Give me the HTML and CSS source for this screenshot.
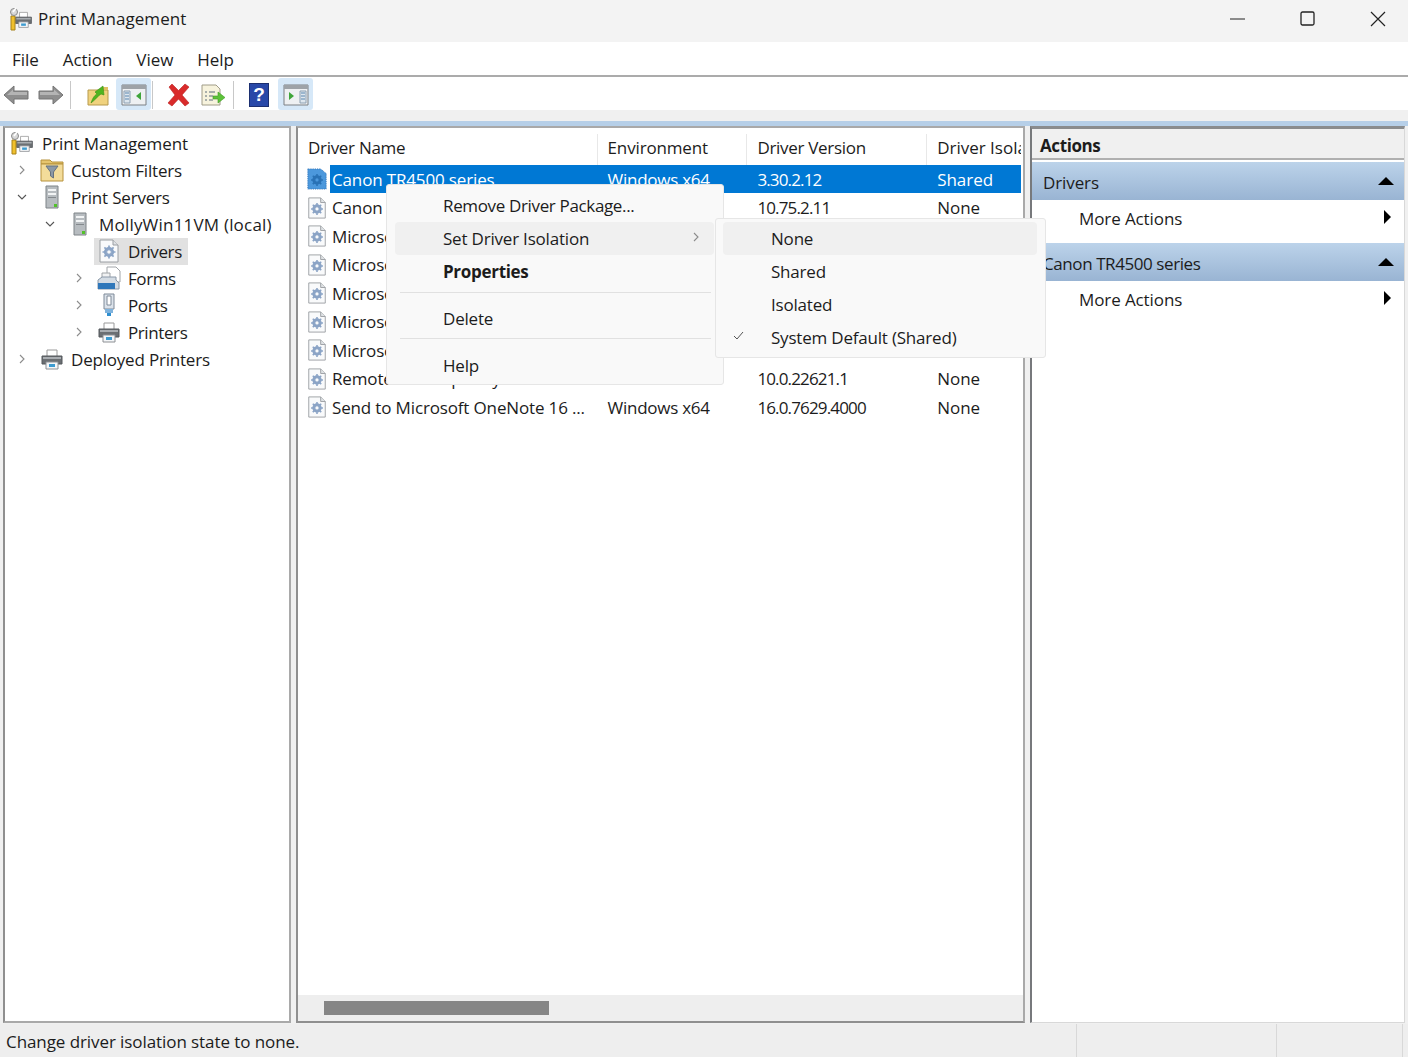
FILE: index.html
```html
<!DOCTYPE html>
<html lang="en">
<head>
<meta charset="utf-8">
<title>Print Management</title>
<link rel="stylesheet" href="styles.css">
</head>
<body>
<svg class="defs" width="0" height="0">
  <defs>
    <symbol id="printer" viewBox="0 0 24 24">
      <path d="M7 3h10v7H7z" fill="#fff" stroke="#9a9a9a"/>
      <path d="M2 9h20v8H2z" fill="#6b6f73" stroke="#55585c"/>
      <path d="M3 10h18v2H3z" fill="#a9adb1"/>
      <path d="M6 15h12v7H6z" fill="#f4f6f8" stroke="#8d9094"/>
      <path d="M9 17h6v3H9z" fill="#3d9bd0"/>
    </symbol>
    <symbol id="root" viewBox="0 0 24 24">
      <use href="#printer" x="5" y="3" width="19" height="19"/>
      <path d="M2 9h4v14H2z" fill="#f0c02c" stroke="#a8821a"/>
      <circle cx="5" cy="5" r="3.500" fill="#d8d8d8" stroke="#8a8a8a"/>
      <path d="M4 5l3-4" stroke="#fff" stroke-width="1.500"/>
    </symbol>
    <symbol id="server" viewBox="0 0 24 24">
      <path d="M6 1h12v22H6z" fill="#b7bcc0" stroke="#7f8488"/>
      <path d="M8 4h8v2H8zM8 8h8v2H8z" fill="#f2f4f5"/>
      <path d="M8 12h8v1H8z" fill="#83888c"/>
      <path d="M14 19h3v3h-3z" fill="#52c22a"/>
    </symbol>
    <symbol id="filter" viewBox="0 0 24 24">
      <path d="M1 6V2h9l2 2h11v2z" fill="#e6c56e" stroke="#b7923c"/>
      <path d="M1 6h22v17H1z" fill="#f3dc9a" stroke="#b7923c"/>
      <path d="M6 8h12l-4.500 6v6l-3-2v-4z" fill="#8b98a6" stroke="#66727e"/>
    </symbol>
    <symbol id="gear" viewBox="0 0 24 24">
      <path d="M3 1h13l5 5v17H3z" fill="#f9fafb" stroke="#9a9ea2"/>
      <path d="M16 1v5h5" fill="#dfe2e5" stroke="#9a9ea2"/>
      <circle cx="12" cy="13" r="3.800" fill="none" stroke="#8ba4c6" stroke-width="2.600"/>
      <path d="M12 6.500v13M5.500 13h13M7.400 8.400l9.200 9.200M16.600 8.400l-9.200 9.200" stroke="#8ba4c6" stroke-width="1.700"/>
      <circle cx="12" cy="13" r="1.800" fill="#f9fafb"/>
    </symbol>
    <symbol id="gear-sel" viewBox="0 0 24 24">
      <path d="M2 1h14l6 5v17H2z" fill="#4c98dc" stroke="#2a70b8" stroke-dasharray="1 1"/>
      <circle cx="12" cy="13" r="3.800" fill="none" stroke="#2a72b5" stroke-width="2.600"/>
      <path d="M12 6.500v13M5.500 13h13M7.400 8.400l9.200 9.200M16.600 8.400l-9.200 9.200" stroke="#2a72b5" stroke-width="1.700"/>
      <circle cx="12" cy="13" r="1.800" fill="#4c98dc"/>
    </symbol>
    <symbol id="forms" viewBox="0 0 24 24">
      <path d="M10 1h9l4 4v11H10z" fill="#fff" stroke="#a0a4a8"/>
      <path d="M5 7h8v9H5z" fill="#f1f2f3" stroke="#a0a4a8"/>
      <path d="M1 14l4-3h14v3l3 3v6H1z" fill="#d4dce4" stroke="#8a98a8"/>
      <path d="M1 17h17v6H1z" fill="#2f77ba"/>
    </symbol>
    <symbol id="port" viewBox="0 0 24 24">
      <path d="M7 1h10v15H7z" fill="#dbe2ea" stroke="#7e8a98"/>
      <path d="M10 3h4v9h-4z" fill="#fff" stroke="#7e8a98"/>
      <path d="M8 16h8v4H8z" fill="#7fb2dc"/>
      <path d="M10 20h4v3h-4z" fill="#2f8fd0"/>
    </symbol>
    <symbol id="caret" viewBox="0 0 10 10">
      <path d="M3 1l4 4-4 4" fill="none" stroke="#8c8c8c" stroke-width="1.100"/>
    </symbol>
    <symbol id="caret-down" viewBox="0 0 10 10">
      <path d="M1 3l4 4 4-4" fill="none" stroke="#555" stroke-width="1.100"/>
    </symbol>
    <symbol id="arrow" viewBox="0 0 26 22">
      <path d="M1 11L11 2v5h14v8H11v5z" fill="#8e8e8e" stroke="#747474"/>
      <path d="M4 11l6-5.500V8h14v3z" fill="#b4b4b4"/>
    </symbol>
    <symbol id="pane" viewBox="0 0 26 22">
      <path d="M1 1h24v20H1z" fill="#eef0f2" stroke="#7c8084"/>
      <path d="M1 1h24v4H1z" fill="#9ea3a8"/>
      <path d="M3 7h6v12H3z" fill="#dde6ee" stroke="#8da0b2"/>
      <path d="M4 9h4M4 12h4M4 15h4" stroke="#5a86ae"/>
    </symbol>
  </defs>
</svg>

<div class="window">
  <header class="titlebar">
    <svg class="ic22 title-icon"><use href="#root"/></svg>
    <span class="title-text">Print Management</span>
    <div class="win-controls">
      <svg width="16" height="16" viewBox="0 0 16 16"><path d="M0 8h15" stroke="#222" stroke-width="1"/></svg>
      <svg width="16" height="16" viewBox="0 0 16 16"><rect x="1" y="1" width="13" height="13" rx="1.500" fill="none" stroke="#222" stroke-width="1.300"/></svg>
      <svg width="16" height="16" viewBox="0 0 16 16"><path d="M1 1l14 14M15 1L1 15" stroke="#222" stroke-width="1.200"/></svg>
    </div>
  </header>

  <nav class="menubar">
    <span>File</span><span>Action</span><span>View</span><span>Help</span>
  </nav>

  <div class="toolbar">
    <svg class="tb-back" width="26" height="22"><use href="#arrow"/></svg>
    <svg class="tb-fwd" width="26" height="22"><use href="#arrow"/></svg>
    <i class="tb-sep"></i>
    <svg class="tb-up" width="22" height="22" viewBox="0 0 22 22">
      <path d="M1 6h20v15H1z" fill="#f0d27e" stroke="#b79a4c"/>
      <path d="M15 3h6v3h-6z" fill="#e0c064"/>
      <path d="M4 19c2-6 4-8 6-9L8 8l8-6 1 9-3-1c-3 2-6 6-10 9z" fill="#4fb51f" stroke="#3a9012" stroke-width=".6"/>
    </svg>
    <span class="tb-btn">
      <svg width="26" height="22"><use href="#pane"/><path d="M20 8v8l-5-4z" fill="#3fa53a"/></svg>
    </span>
    <i class="tb-sep tb-sep-tight"></i>
    <svg class="tb-x" width="25" height="24" viewBox="0 0 25 24">
      <path d="M3 4l3-3 6.500 6.500L19 1l4 3-7 8 7 8-4 3-6.500-7L6 23l-4-3 7-8z" fill="#d92b2b" stroke="#b81c1c" stroke-width=".6"/>
    </svg>
    <svg class="tb-export" width="25" height="22" viewBox="0 0 25 22">
      <path d="M1 1h14l4 4v16H1z" fill="#f7f3dd" stroke="#a09c88"/>
      <path d="M4 8h2M8 8h6M4 12h2M8 12h4M4 16h2M8 16h4" stroke="#5b6b7a"/>
      <path d="M12 12h5V8l7 5.500L17 19v-4h-5z" fill="#5dc23a" stroke="#3f9c22" stroke-width=".6"/>
    </svg>
    <i class="tb-sep tb-sep-help"></i>
    <svg class="tb-help" width="20" height="24" viewBox="0 0 20 24">
      <rect x=".5" y=".5" width="19" height="23" fill="#2848a8" stroke="#1c2f70"/>
      <text x="10" y="18" text-anchor="middle" class="help-mark">?</text>
    </svg>
    <span class="tb-btn tb-btn-last">
      <svg width="26" height="22"><use href="#pane" transform="matrix(-1 0 0 1 26 0)"/><path d="M6 8v8l5-4z" fill="#3fa53a"/></svg>
    </span>
  </div>

  <div class="band"></div>

  <main class="workspace">
    <section class="tree-pane">
      <div class="tree-row lv0"><svg class="ic22"><use href="#root"/></svg><span class="lbl">Print Management</span></div>
      <div class="tree-row lv1"><svg class="tw"><use href="#caret"/></svg><svg class="ic22"><use href="#filter"/></svg><span class="lbl">Custom Filters</span></div>
      <div class="tree-row lv1"><svg class="tw"><use href="#caret-down"/></svg><svg class="ic22"><use href="#server"/></svg><span class="lbl">Print Servers</span></div>
      <div class="tree-row lv2"><svg class="tw"><use href="#caret-down"/></svg><svg class="ic22"><use href="#server"/></svg><span class="lbl">MollyWin11VM (local)</span></div>
      <div class="tree-row lv3 selected"><svg class="tw tw-empty"></svg><span class="sel-bg"><svg class="ic22"><use href="#gear"/></svg><span class="lbl">Drivers</span></span></div>
      <div class="tree-row lv3"><svg class="tw"><use href="#caret"/></svg><svg class="ic22"><use href="#forms"/></svg><span class="lbl">Forms</span></div>
      <div class="tree-row lv3"><svg class="tw"><use href="#caret"/></svg><svg class="ic22"><use href="#port"/></svg><span class="lbl">Ports</span></div>
      <div class="tree-row lv3"><svg class="tw"><use href="#caret"/></svg><svg class="ic22"><use href="#printer"/></svg><span class="lbl">Printers</span></div>
      <div class="tree-row lv1"><svg class="tw"><use href="#caret"/></svg><svg class="ic22"><use href="#printer"/></svg><span class="lbl">Deployed Printers</span></div>
    </section>

    <section class="list-pane">
      <div class="list-body">
        <div class="list-row list-head">
          <span class="c1 hd">Driver Name</span><span class="c2 hd">Environment</span><span class="c3 hd">Driver Version</span><span class="c4">Driver Isola</span>
        </div>
        <div class="list-row sel"><svg class="ic22 row-ic"><use href="#gear-sel"/></svg><span class="c1t hi">Canon TR4500 series</span><span class="c2 hi">Windows x64</span><span class="c3 hi">3.30.2.12</span><span class="c4 hi">Shared</span></div>
        <div class="list-row"><svg class="ic22 row-ic"><use href="#gear"/></svg><span class="c1t">Canon TS5100 series</span><span class="c2">Windows x64</span><span class="c3">10.75.2.11</span><span class="c4">None</span></div>
        <div class="list-row"><svg class="ic22 row-ic"><use href="#gear"/></svg><span class="c1t">Microsoft enhanced Point</span><span class="c2">Windows x64</span><span class="c3">10.0.22621.1</span><span class="c4">None</span></div>
        <div class="list-row"><svg class="ic22 row-ic"><use href="#gear"/></svg><span class="c1t">Microsoft Print To PDF</span><span class="c2">Windows x64</span><span class="c3">10.0.22621.1</span><span class="c4">None</span></div>
        <div class="list-row"><svg class="ic22 row-ic"><use href="#gear"/></svg><span class="c1t">Microsoft Shared Fax</span><span class="c2">Windows x64</span><span class="c3">10.0.22621.1</span><span class="c4">None</span></div>
        <div class="list-row"><svg class="ic22 row-ic"><use href="#gear"/></svg><span class="c1t">Microsoft Software Printer</span><span class="c2">Windows x64</span><span class="c3">10.0.22621.1</span><span class="c4">None</span></div>
        <div class="list-row"><svg class="ic22 row-ic"><use href="#gear"/></svg><span class="c1t">Microsoft XPS Document</span><span class="c2">Windows x64</span><span class="c3">10.0.22621.1</span><span class="c4">None</span></div>
        <div class="list-row"><svg class="ic22 row-ic"><use href="#gear"/></svg><span class="c1t">Remote Desktop Easy Print</span><span class="c2">Windows x64</span><span class="c3">10.0.22621.1</span><span class="c4">None</span></div>
        <div class="list-row"><svg class="ic22 row-ic"><use href="#gear"/></svg><span class="c1t">Send to Microsoft OneNote 16 ...</span><span class="c2">Windows x64</span><span class="c3">16.0.7629.4000</span><span class="c4">None</span></div>
      </div>
      <div class="hscroll"><div class="hthumb"></div></div>
    </section>

    <aside class="actions-pane">
      <div class="actions-title">Actions</div>
      <div class="act-bar"><span>Drivers</span><i class="tri-up"></i></div>
      <div class="act-item"><span>More Actions</span><i class="tri-right"></i></div>
      <div class="act-bar"><span class="tight">Canon TR4500 series</span><i class="tri-up"></i></div>
      <div class="act-item"><span>More Actions</span><i class="tri-right"></i></div>
    </aside>
  </main>

  <footer class="statusbar">
    <span class="status-msg">Change driver isolation state to none.</span>
    <i class="st-cell st-a"></i><i class="st-cell st-b"></i>
  </footer>

  <div class="menu menu-main">
    <div class="mi">Remove Driver Package...</div>
    <div class="mi hover">Set Driver Isolation<svg class="mi-caret" width="10" height="10"><use href="#caret"/></svg></div>
    <div class="mi bold">Properties</div>
    <div class="msep msep-a"></div>
    <div class="mi">Delete</div>
    <div class="msep msep-b"></div>
    <div class="mi">Help</div>
  </div>

  <div class="menu menu-sub">
    <div class="mi hover">None</div>
    <div class="mi">Shared</div>
    <div class="mi">Isolated</div>
    <div class="mi"><svg class="check" width="12" height="10" viewBox="0 0 12 10"><path d="M1 5l3 3 6-7" fill="none" stroke="#555" stroke-width="1"/></svg>System Default (Shared)</div>
  </div>
</div>
</body>
</html>
```

FILE: styles.css
```css
* { box-sizing: border-box; }
html, body { margin: 0; height: 100%; }
body { font-family: "Open Sans", "Noto Sans", sans-serif; font-size: 17px; color: #1c1c1c; background: #f0f0f0; overflow: hidden; }
.defs { position: absolute; }
.window { position: relative; width: 1408px; height: 1057px; display: flex; flex-direction: column; overflow: hidden; }
.ic22 { width: 22px; height: 22px; flex: none; }
span { white-space: nowrap; }

.titlebar { height: 42px; background: #f3f3f3; display: flex; align-items: center; padding-left: 9px; }
.title-icon { width: 24px; height: 24px; margin-top: -4px; }
.title-text { margin-left: 5px; margin-top: -4px; letter-spacing: .05px; }
.win-controls { margin-left: auto; display: flex; gap: 54px; padding-right: 22px; margin-top: -4px; }

.menubar { height: 35px; background: #fff; border-bottom: 2px solid #ababab; display: flex; align-items: center; padding-left: 12px; gap: 24px; padding-top: 3px; letter-spacing: -.05px; }

.toolbar { height: 33px; background: #fff; display: flex; align-items: center; padding-left: 3px; }
.toolbar > svg { margin-top: 4px; }
.tb-fwd { margin-left: 9px; transform: scaleX(-1); }
.tb-sep { width: 1px; height: 28px; background: #c8c8c8; margin-left: 6px; margin-top: 3px; }
.tb-up { margin-left: 16px; }
.tb-btn { width: 35px; height: 32px; background: #d6e8f8; border-radius: 3px; display: flex; align-items: center; justify-content: center; margin-left: 7px; margin-top: 1px; padding-top: 2px; }
.tb-sep-tight { margin-left: 1px; }
.tb-x { margin-left: 13px; }
.tb-export { margin-left: 10px; }
.tb-sep-help { margin-left: 7px; }
.tb-help { margin-left: 15px; }
.help-mark { font: bold 19px "Liberation Sans", sans-serif; fill: #fff; }
.tb-btn-last { margin-left: 9px; }

.band { height: 11px; background: #f0f0f0; }

.workspace { height: 903px; background: #f0f0f0; border-top: 5px solid #b6cfe8; display: flex; padding-left: 3px; }

.tree-pane { width: 288px; height: 897px; background: #fff; border: 2px solid #a9a9a9; border-left-color: #8f8f8f; padding-top: 2px; flex: none; letter-spacing: -.1px; }
.tree-row { height: 27px; display: flex; align-items: center; }
.tree-row .ic22 { width: 24px; height: 24px; }
.tree-row.lv0 { padding-left: 5px; }
.tree-row.lv1 { padding-left: 12px; letter-spacing: -.2px; }
.tree-row.lv2 { padding-left: 40px; letter-spacing: .2px; }
.tree-row.lv3 { padding-left: 69px; letter-spacing: -.4px; }
.tw { width: 10px; height: 10px; flex: none; margin-right: 13px; }
.lbl { margin-left: 7px; }
.lv0 .lbl { margin-left: 8px; }
.sel-bg { display: flex; align-items: center; background: #e1e1e1; height: 27px; padding: 0 6px 0 3px; margin-left: -3px; }
.sel-bg .ic22 { width: 24px; height: 24px; }

.list-pane { width: 729px; height: 897px; margin-left: 5px; background: #fff; border: 2px solid #a9a9a9; border-left-color: #8f8f8f; border-bottom-color: #8f8f8f; display: flex; flex-direction: column; flex: none; }
.list-body { flex: 1; padding-top: 6px; overflow: hidden; }
.list-row { height: 28.5px; display: flex; align-items: center; padding-left: 8px; position: relative; width: 723px; letter-spacing: -.15px; }
.list-head { height: 31px; padding-left: 10px; letter-spacing: -.3px; }
.hd { border-right: 1px solid #e8e8e8; align-self: stretch; display: flex; align-items: center; padding-bottom: 4px; }
.list-head .c4 { padding-bottom: 4px; }
.c1 { width: 290px; }
.c1t { width: 268px; padding: 0 0 0 2px; margin-left: 2px; overflow: hidden; height: 100%; line-height: 29px; }
.c2 { width: 150px; padding-left: 10px; letter-spacing: -.27px; }
.c3 { width: 180px; padding-left: 10px; letter-spacing: -.85px; }
.c4 { width: 94px; padding-left: 10px; overflow: hidden; letter-spacing: 0; }
.list-head .c2 { letter-spacing: -.15px; }
.list-head .c3 { letter-spacing: -.3px; }
.sel .hi { color: #fff; background: #0078d4; height: 100%; display: flex; align-items: center; }
.row-ic { margin-right: 0; }

.hscroll { height: 26px; background: #eeeeee; padding: 6px 0 0 26px; flex: none; }
.hthumb { width: 225px; height: 14px; background: #868686; }

.actions-pane { width: 375px; height: 897px; margin-left: 5px; background: #fff; border: 1px solid #d8d8d8; border-left: 2px solid #77797c; border-top: 3px solid #8a8c8e; flex: none; letter-spacing: -.1px; }
.actions-title { height: 31px; background: #f0f0f0; font-weight: 700; padding-left: 8px; padding-top: 2px; line-height: 30px; border-bottom: 2px solid #b0b0b0; letter-spacing: -.4px; }
.act-bar { height: 38px; background: linear-gradient(#bcd3ea, #99b4d3); display: flex; align-items: center; padding: 3px 10px 0 11px; justify-content: space-between; }
.actions-title + .act-bar { margin-top: 2px; }
.tight { letter-spacing: -.42px; }
.act-item { height: 43px; display: flex; align-items: center; padding: 0 13px 6px 47px; justify-content: space-between; }
.tri-up { width: 0; height: 0; border-left: 8px solid transparent; border-right: 8px solid transparent; border-bottom: 8px solid #000; margin-top: -3px; }
.tri-right { width: 0; height: 0; border-top: 7px solid transparent; border-bottom: 7px solid transparent; border-left: 7px solid #000; margin-top: -2px; }

.statusbar { height: 33px; margin-top: 1px; background: #eeeeee; display: flex; align-items: stretch; padding-left: 6px; position: relative; letter-spacing: -.08px; }
.status-msg { line-height: 36px; }
.st-cell { width: 200px; border-left: 1px solid #d8d8d8; }
.st-a { margin-left: auto; }
.st-b { width: 127px; border-right: 1px solid #d8d8d8; margin-right: 5px; }

.menu { position: absolute; background: #f9f9f9; border: 1px solid #e6e6e6; border-radius: 3px; }
.menu-main { left: 386px; top: 184px; width: 338px; height: 201px; padding: 4px 9px 0 8px; letter-spacing: -.2px; }
.menu-main .mi:first-child { letter-spacing: -.35px; }
.menu-sub { left: 715px; top: 218px; width: 331px; height: 140px; padding: 3px 8px 0 7px; letter-spacing: -.2px; }
.mi { height: 33px; display: flex; align-items: center; padding-left: 48px; border-radius: 4px; position: relative; }
.hover { background: #f0f0f0; }
.bold { font-weight: 700; letter-spacing: -.3px; }
.mi-caret { position: absolute; right: 13px; top: 10px; }
.msep { height: 1px; background: #e1e1e1; }
.msep-a { margin: 4px 3px 9px 5px; }
.msep-b { margin: 3px 3px 10px 5px; }
.check { position: absolute; left: 10px; top: 10px; }
```
